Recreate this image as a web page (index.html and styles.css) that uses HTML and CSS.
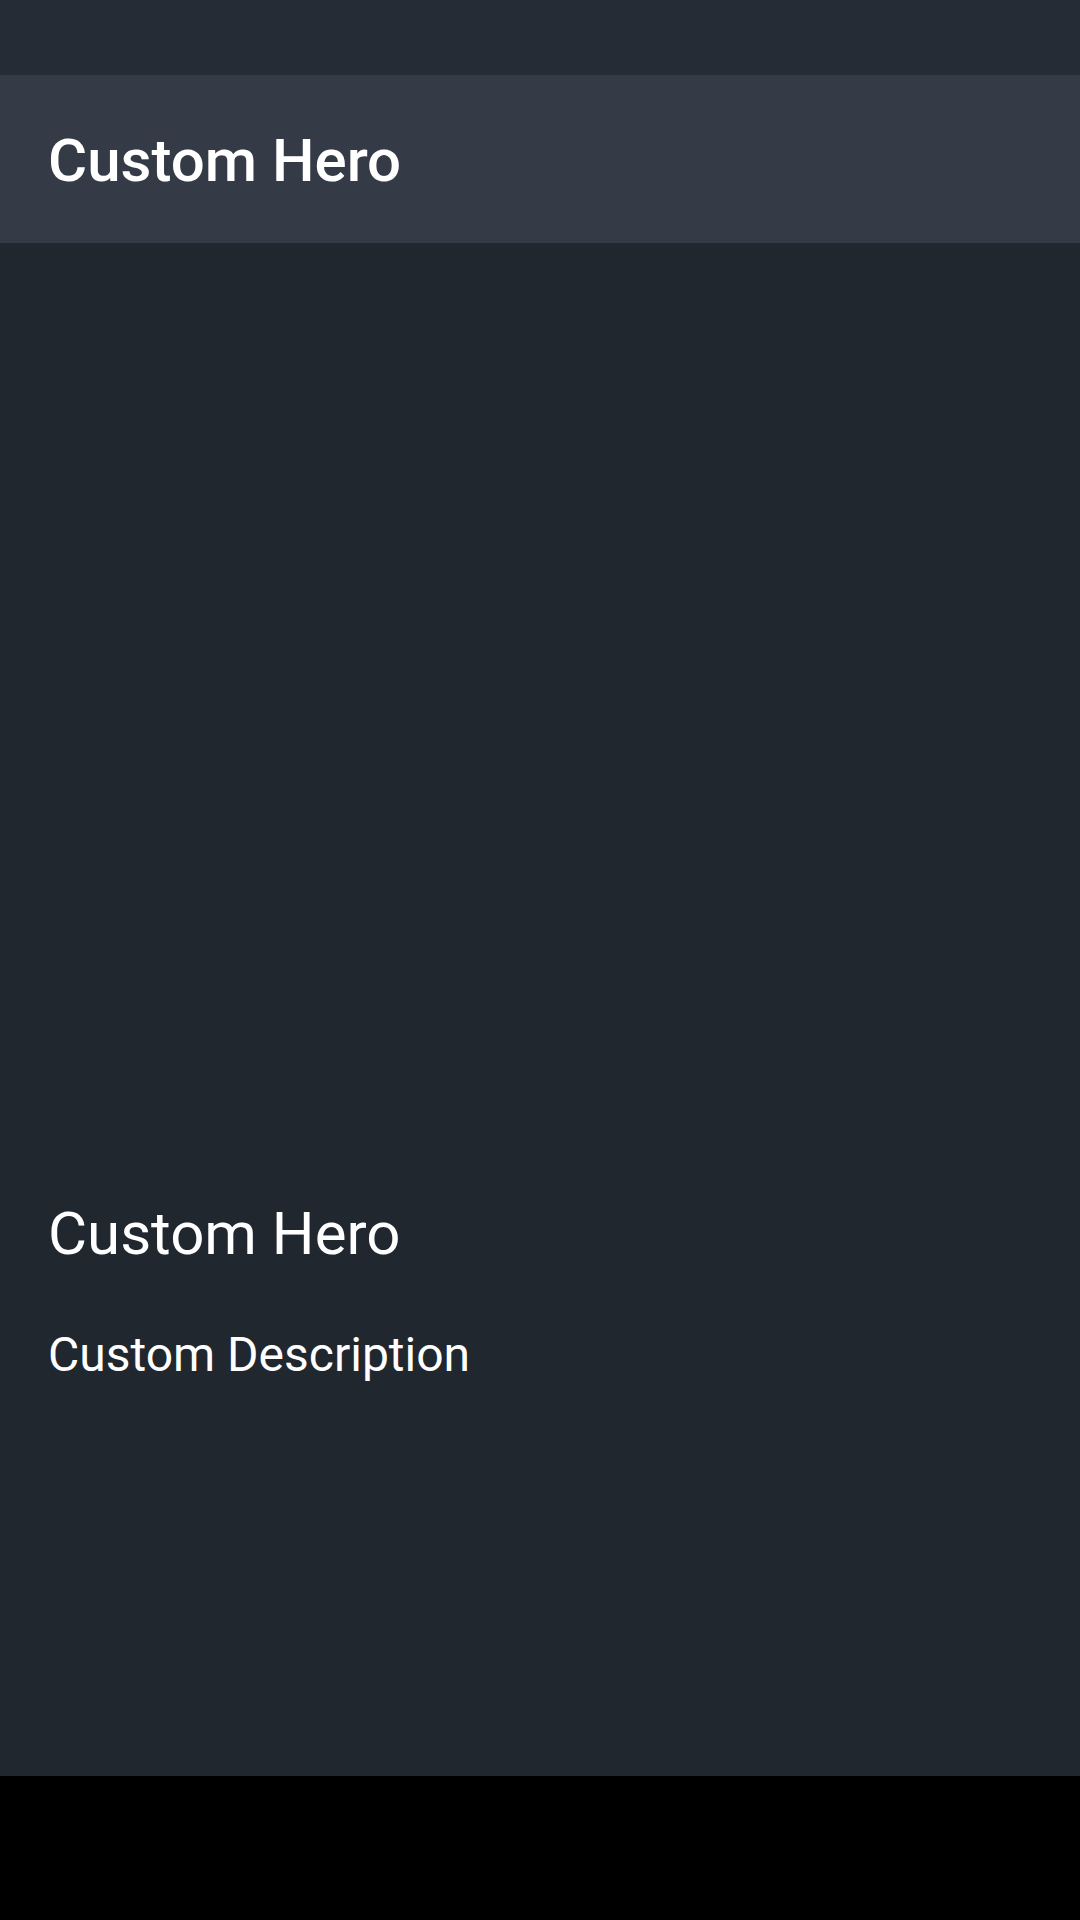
FILE: index.html
```html
<!DOCTYPE html>
<html>
<head>
<meta charset="utf-8">
<link rel="stylesheet" href="styles.css">
</head>
<body>
<div class="screen">
  <div class="status-bar"></div>
  <header class="toolbar">
    <h1 class="toolbar-title">Custom Hero</h1>
  </header>
  <main class="hero">
    <h2 class="hero-title">Custom Hero</h2>
    <p class="hero-desc">Custom Description</p>
  </main>
  <div class="nav-bar"></div>
</div>
</body>
</html>
```

FILE: styles.css
```css
html, body {
  margin: 0;
  padding: 0;
  background: #000;
}
.screen {
  width: 1080px;
  height: 1920px;
  display: flex;
  flex-direction: column;
  font-family: Roboto, "Noto Sans", sans-serif;
  color: #ffffff;
}
.status-bar {
  height: 75px;
  background: #262c36;
  flex: none;
}
.toolbar {
  height: 168px;
  box-sizing: border-box;
  padding: 50px 48px 0;
  background: #343a46;
  flex: none;
}
.toolbar-title {
  margin: 0;
  font-size: 60px;
  line-height: 72px;
  font-weight: 500;
}
.hero {
  flex: none;
  height: 1533px;
  box-sizing: border-box;
  padding: 955px 48px 0;
  background: #21272f;
  display: flex;
  flex-direction: column;
}
.hero-title {
  margin: 0;
  font-size: 60px;
  line-height: 72px;
  font-weight: 400;
}
.hero-desc {
  margin: 57px 0 0;
  font-size: 48px;
  line-height: 56px;
  font-weight: 400;
}
.nav-bar {
  flex: 1;
  background: #000;
}
```
